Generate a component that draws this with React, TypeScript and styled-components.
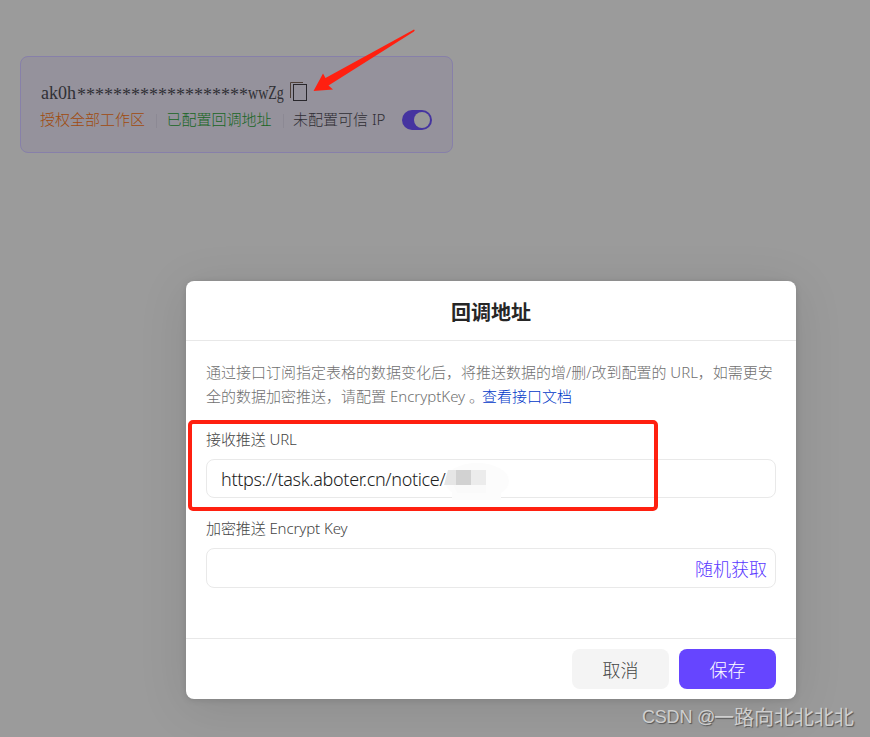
import React from "react";
import styled, { createGlobalStyle } from "styled-components";

const GlobalStyle = createGlobalStyle`
  * { box-sizing: border-box; }
  body {
    margin: 0;
    overflow: hidden;
    background: #9b9b9b;
    font-family: "Noto Sans", "Noto Sans CJK SC", sans-serif;
    font-weight: 300;
  }
`;

const Page = styled.main`
  height: 737px;
  padding: 56px 20px;
  position: relative;
  overflow: hidden;
`;

const KeyCard = styled.section`
  width: 433px;
  height: 97px;
  padding: 25px 20px 0 20px;
  border: 1px solid #8780a9;
  border-radius: 8px;
  background: #95929c;
`;

const KeyRow = styled.div`
  display: flex;
  align-items: center;
  height: 22px;
  font: 400 18px/22px "Liberation Serif", serif;
  color: #303035;
`;

const KeyPart = styled.span<{ $width: number }>`
  width: ${(p) => p.$width}px;
  flex: none;
  white-space: nowrap;
`;

const Stars = styled(KeyPart)`
  padding-top: 4px;
`;

const Narrow = styled(KeyPart)`
  transform: scaleX(0.78);
  transform-origin: left;
`;

const CopyIcon = styled.svg`
  width: 18px;
  height: 21px;
  margin: -3px 0 0 6px;
`;

const StatusRow = styled.div`
  display: flex;
  align-items: center;
  height: 30px;
  padding-top: 1px;
`;

const Status = styled.span<{ $color: string }>`
  color: ${(p) => p.$color};
  font-size: 15px;
  line-height: 20px;
  white-space: nowrap;
  margin: -1px 0 0 -1px;
`;

const Divider = styled.i`
  width: 1px;
  height: 14px;
  margin: 2px 10.5px 0 11px;
  background: #8c8994;
`;

const Toggle = styled.span`
  display: flex;
  justify-content: flex-end;
  width: 30px;
  height: 20px;
  padding: 2px;
  margin-left: auto;
  border-radius: 10px;
  background: #4534a0;
  &::after {
    content: "";
    width: 16px;
    height: 16px;
    border-radius: 50%;
    background: #999;
  }
`;

const Arrow = styled.svg`
  position: absolute;
  left: 313px;
  top: 28px;
  width: 104px;
  height: 65px;
`;

const Dialog = styled.section`
  position: absolute;
  left: 186px;
  top: 281px;
  display: flex;
  flex-direction: column;
  width: 610px;
  height: 418px;
  border-radius: 8px;
  background: #fff;
  box-shadow: 0 8px 50px rgba(0, 0, 0, 0.1), 0 1px 6px rgba(0, 0, 0, 0.12);
`;

const Title = styled.h2`
  margin: 0;
  height: 60px;
  border-bottom: 1px solid #e8e8e8;
  font-size: 20px;
  font-weight: 700;
  line-height: 63px;
  text-align: center;
  color: #262626;
`;

const Body = styled.div`
  flex: 1;
  padding: 19px 20px 0;
`;

const Description = styled.p`
  margin: 0;
  font-size: 15px;
  line-height: 24px;
  color: #707070;
  white-space: nowrap;
`;

const DocLink = styled.a`
  color: #0038c8;
  margin-left: -2px;
`;

const Label = styled.label<{ $top: number }>`
  display: block;
  margin: ${(p) => p.$top}px 0 9px;
  font-size: 15px;
  line-height: 22px;
  letter-spacing: -0.1px;
  color: #444;
`;

const Field = styled.div<{ $height: number }>`
  display: flex;
  align-items: center;
  height: ${(p) => p.$height}px;
  padding: 0 8px 0 14px;
  border: 1px solid #e9e9e9;
  border-radius: 8px;
  font-size: 18px;
  color: #222;
  white-space: nowrap;
`;

const UrlText = styled.span`
  width: 225px;
  padding-top: 1px;
  letter-spacing: -0.33px;
`;

const Mosaic = styled.svg`
  width: 66px;
  height: 38px;
  flex: none;
  margin: 0 0 -4px -3px;
`;

const RandomLink = styled.a`
  margin-left: auto;
  padding-bottom: 1px;
  color: #5a38ff;
`;

const Footer = styled.footer`
  display: flex;
  justify-content: flex-end;
  gap: 10px;
  height: 61px;
  padding: 10px 20px;
  border-top: 1px solid #e8e8e8;
`;

const Button = styled.button<{ $primary?: boolean }>`
  width: 97px;
  height: 40px;
  padding: 0 0 1px;
  border: 0;
  border-radius: 8px;
  background: ${(p) => (p.$primary ? "#6645ff" : "#f4f4f4")};
  color: ${(p) => (p.$primary ? "#fff" : "#444")};
  font: inherit;
  font-size: 18px;
`;

const Highlight = styled.div`
  position: absolute;
  left: 2px;
  top: 139px;
  width: 470px;
  height: 91px;
  border: 4px solid #ff2010;
  border-radius: 5px;
`;

const Watermark = styled.div`
  position: absolute;
  left: 642px;
  top: 704px;
  display: flex;
  font: 400 20px/26px "Noto Sans CJK SC", sans-serif;
  color: #cfcfcf;
  text-shadow: 1px 1px 1px #555;
  white-space: nowrap;
`;

const WatermarkSite = styled.span`
  width: 72px;
  font: 400 18px/27px "Liberation Sans", sans-serif;
  letter-spacing: -0.2px;
`;

export default function App() {
  return (
    <>
      <GlobalStyle />
      <Page>
        <KeyCard>
          <KeyRow>
            <KeyPart $width={36}>ak0h</KeyPart>
            <Stars $width={171}>*******************</Stars>
            <Narrow $width={36}>wwZg</Narrow>
            <CopyIcon viewBox="0 0 18 21" fill="none" stroke="#29272c">
              <path d="M0.5 17V1.5H13" stroke="#4e4038" />
              <rect x="3.5" y="3.5" width="13" height="16" />
            </CopyIcon>
          </KeyRow>
          <StatusRow>
            <Status $color="#a04a0c">授权全部工作区</Status>
            <Divider />
            <Status $color="#186624">已配置回调地址</Status>
            <Divider />
            <Status $color="#302e34">未配置可信 IP</Status>
            <Toggle />
          </StatusRow>
        </KeyCard>

        <Arrow viewBox="313 28 104 65">
          <path
            d="M313.5 91L323 73.5L325.5 78L414 29.5Q415.500 30 414 31.500L328.500 85.500L333 89.500Z"
            fill="#ff2010"
          />
        </Arrow>

        <Dialog>
          <Title>回调地址</Title>
          <Body>
            <Description>
              通过接口订阅指定表格的数据变化后，将推送数据的增/删/改到配置的 URL，如需更安
              <br />
              全的数据加密推送，请配置 EncryptKey 。<DocLink>查看接口文档</DocLink>
            </Description>
            <Label $top={20}>接收推送 URL</Label>
            <Field $height={39}>
              <UrlText>https://task.aboter.cn/notice/</UrlText>
              <Mosaic viewBox="0 0 66 38">
                <ellipse cx="34" cy="19" rx="32" ry="18" fill="#fcfcfc" />
                <path d="M9 38H58V30H9Z" fill="#fcfcfc" />
                <path d="M5 8H13V23H1Z" fill="#e6e6e6" />
                <path d="M13 8h15v15H13Z" fill="#d2d2d2" />
                <path d="M28 8h15v15H28Z" fill="#ececec" />
                <path d="M10 23h33v8H14Z" fill="#fafafa" />
              </Mosaic>
            </Field>
            <Label $top={19}>加密推送 Encrypt Key</Label>
            <Field $height={40}>
              <RandomLink>随机获取</RandomLink>
            </Field>
          </Body>
          <Footer>
            <Button>取消</Button>
            <Button $primary>保存</Button>
          </Footer>
          <Highlight />
        </Dialog>
        <Watermark>
          <WatermarkSite>CSDN @</WatermarkSite>
          一路向北北北北
        </Watermark>
      </Page>
    </>
  );
}
